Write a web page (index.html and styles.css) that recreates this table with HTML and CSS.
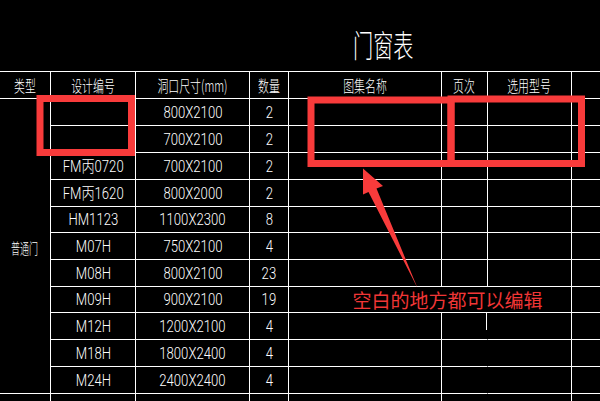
FILE: index.html
```html
<!DOCTYPE html>
<html lang="zh">
<head>
<meta charset="utf-8">
<title>门窗表</title>
<link rel="stylesheet" href="styles.css">
</head>
<body>
<div class="page">
  <div class="title-bar"><h1 class="title"><span class="sx">门窗表</span></h1></div>
  <div class="sheet">
    <div class="c h"><span class="cn">类型</span></div>
    <div class="c h"><span class="cn">设计编号</span></div>
    <div class="c h"><span class="cn">洞口尺寸(mm)</span></div>
    <div class="c h"><span class="cn">数量</span></div>
    <div class="c h"><span class="cn">图集名称</span></div>
    <div class="c h"><span class="cn">页次</span></div>
    <div class="c h"><span class="cn">选用型号</span></div>
    <div class="c h"></div>

    <div class="c type"><span class="cn sm">普通门</span></div>
    <div class="c"></div><div class="c"><span class="d">800X2100</span></div><div class="c"><span class="d">2</span></div><div class="c"></div><div class="c"></div><div class="c"></div><div class="c"></div>
    <div class="c"></div><div class="c"><span class="d">700X2100</span></div><div class="c"><span class="d">2</span></div><div class="c"></div><div class="c"></div><div class="c"></div><div class="c"></div>
    <div class="c"><span class="d">FM丙0720</span></div><div class="c"><span class="d">700X2100</span></div><div class="c"><span class="d">2</span></div><div class="c"></div><div class="c"></div><div class="c"></div><div class="c"></div>
    <div class="c"><span class="d">FM丙1620</span></div><div class="c"><span class="d">800X2000</span></div><div class="c"><span class="d">2</span></div><div class="c"></div><div class="c"></div><div class="c"></div><div class="c"></div>
    <div class="c"><span class="d">HM1123</span></div><div class="c"><span class="d">1100X2300</span></div><div class="c"><span class="d">8</span></div><div class="c"></div><div class="c"></div><div class="c"></div><div class="c"></div>
    <div class="c"><span class="d">M07H</span></div><div class="c"><span class="d">750X2100</span></div><div class="c"><span class="d">4</span></div><div class="c"></div><div class="c"></div><div class="c"></div><div class="c"></div>
    <div class="c"><span class="d">M08H</span></div><div class="c"><span class="d">800X2100</span></div><div class="c"><span class="d">23</span></div><div class="c"></div><div class="c"></div><div class="c"></div><div class="c"></div>
    <div class="c"><span class="d">M09H</span></div><div class="c"><span class="d">900X2100</span></div><div class="c"><span class="d">19</span></div><div class="c"></div><div class="c"></div><div class="c"></div><div class="c"></div>
    <div class="c"><span class="d">M12H</span></div><div class="c"><span class="d">1200X2100</span></div><div class="c"><span class="d">4</span></div><div class="c"></div><div class="c stub"></div><div class="c"></div><div class="c"></div>
    <div class="c"><span class="d">M18H</span></div><div class="c"><span class="d">1800X2400</span></div><div class="c"><span class="d">4</span></div><div class="c"></div><div class="c open"></div><div class="c"></div><div class="c"></div>
    <div class="c"><span class="d">M24H</span></div><div class="c"><span class="d">2400X2400</span></div><div class="c"><span class="d">4</span></div><div class="c"></div><div class="c open"></div><div class="c"></div><div class="c"></div>

    <div class="c last"></div><div class="c last"></div><div class="c last"><span class="d">1100X2700</span></div><div class="c last"><span class="d">1</span></div><div class="c last"></div><div class="c last open"></div><div class="c last"></div><div class="c last"></div>
  </div>

  <svg class="marks" width="600" height="401" viewBox="0 0 600 401" aria-hidden="true">
    <g fill="none" stroke="#f83b3b" stroke-width="7">
      <rect x="40" y="98.5" width="91.5" height="54"/>
      <rect x="311" y="100" width="140" height="63.5"/>
      <rect x="451" y="99" width="130.5" height="64.5"/>
    </g>
    <polygon fill="#f83b3b" points="363,168.5 383,186 376.5,188.5 417.5,288 368.5,192 363,194.5"/>
  </svg>
  <div class="note">空白的地方都可以编辑</div>
</div>
</body>
</html>
```

FILE: styles.css
```css
* { box-sizing: border-box; }

html, body {
  margin: 0;
  padding: 0;
  background: #000;
}

body {
  width: 600px;
  height: 401px;
  overflow: hidden;
  color: #fff;
  font-family: "Roboto", "Noto Sans CJK SC", sans-serif;
}

.page {
  position: relative;
  width: 600px;
  height: 401px;
  overflow: hidden;
}

.title-bar {
  height: 71px;
  display: flex;
  align-items: flex-start;
  padding: 28px 0 0 353px;
}

.title {
  margin: 0;
  font-family: "Noto Sans CJK SC", sans-serif;
  font-weight: 300;
  font-size: 31px;
  line-height: 1;
}

.title .sx {
  display: inline-block;
  transform: scaleX(0.65);
  transform-origin: left center;
  white-space: nowrap;
}

.sheet {
  display: grid;
  grid-template-columns: 51px 85px 114px 39px 153px 46px 84px 80px;
  grid-template-rows: 27px 27px 27px 27px 27px 26px 27px 27px 26px 27px 27px 27px 27px;
  width: 652px;
  border-top: 1px solid #fff;
}

.c {
  display: flex;
  align-items: center;
  justify-content: center;
  border-right: 1px solid #fff;
  border-bottom: 1px solid #fff;
  white-space: nowrap;
  overflow: visible;
}

.type {
  grid-row: 2 / span 11;
  padding-top: 3px;
}

.c.open { border-right-color: transparent; }

.c.stub {
  border-right-color: transparent;
  background: linear-gradient(#fff, #fff) right top / 1px 17px no-repeat;
}

.c.last {
  border-bottom: 0;
  align-items: flex-start;
  padding-top: 5px;
}

.cn {
  display: inline-block;
  font-family: "Noto Sans CJK SC", sans-serif;
  font-weight: 300;
  font-size: 16px;
  line-height: 1;
  transform: scaleX(0.68);
}

.cn.sm {
  font-size: 15px;
  transform: scaleX(0.6);
}

.d {
  display: inline-block;
  font-family: "Roboto", "Noto Sans CJK SC", sans-serif;
  font-weight: 300;
  font-size: 16px;
  line-height: 1;
  transform: scaleX(0.82);
  padding-top: 1px;
}

.marks {
  position: absolute;
  left: 0;
  top: 0;
  pointer-events: none;
}

.note {
  position: absolute;
  left: 345px;
  top: 287px;
  width: 205px;
  height: 25px;
  background: #000;
  color: #f03636;
  font-family: "Noto Sans CJK SC", sans-serif;
  font-size: 19px;
  line-height: 25px;
  text-align: center;
  white-space: nowrap;
}
```
